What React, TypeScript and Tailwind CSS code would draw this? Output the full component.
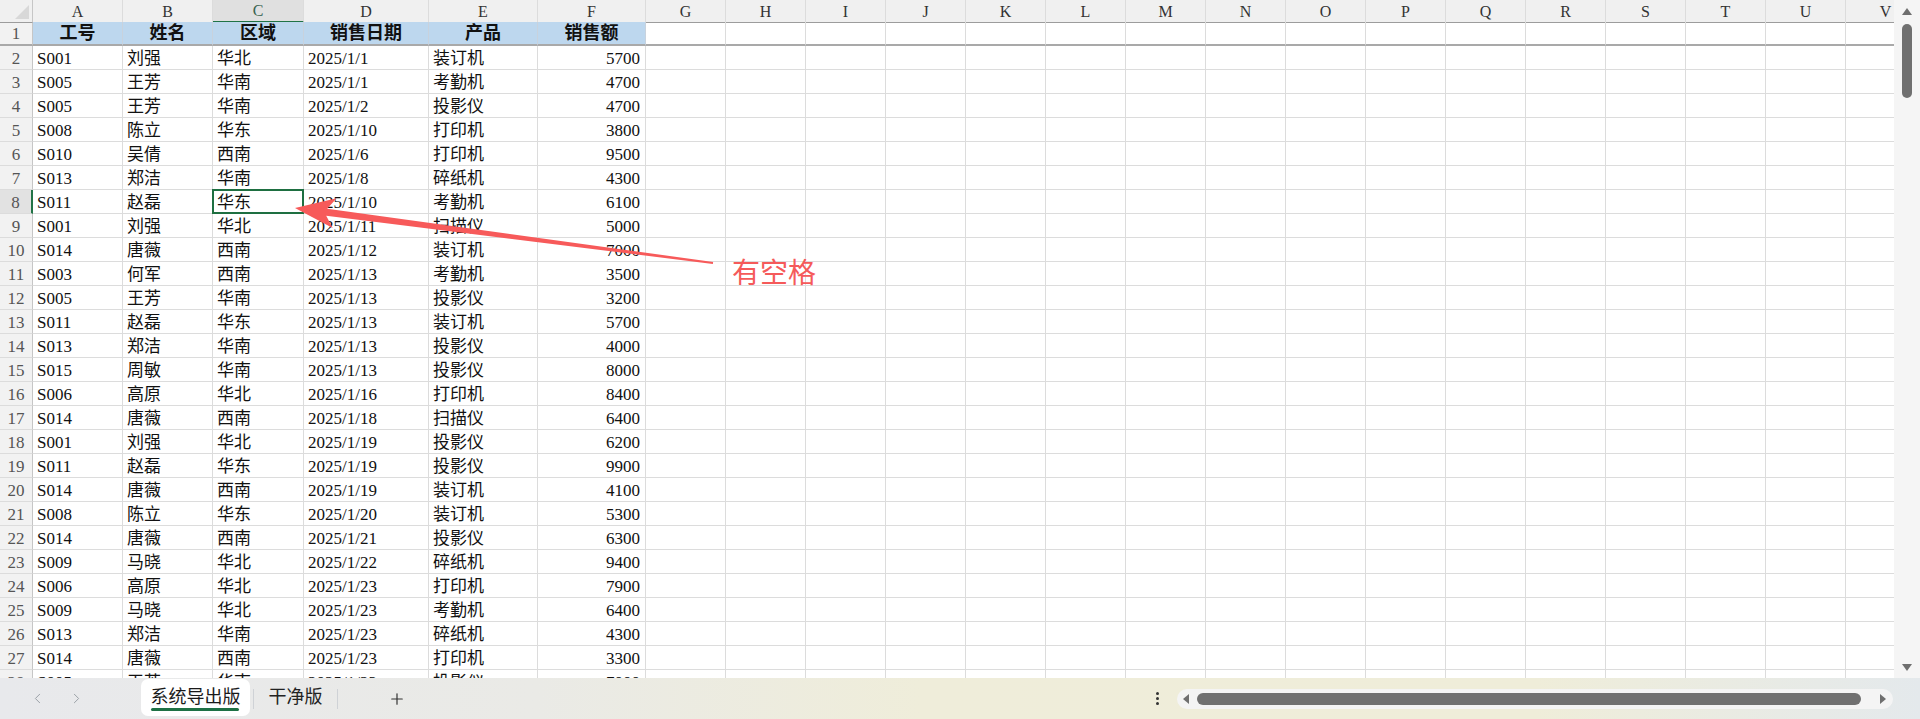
import { ChevronLeft, ChevronRight, Plus } from "lucide-react";

type Row = [string, string, string, string, string, number];

// 系统导出版 sheet data
const ROWS: Row[] = [
  ["S001", "刘强", "华北", "2025/1/1", "装订机", 5700],
  ["S005", "王芳", "华南", "2025/1/1", "考勤机", 4700],
  ["S005", "王芳", "华南", "2025/1/2", "投影仪", 4700],
  ["S008", "陈立", "华东", "2025/1/10", "打印机", 3800],
  ["S010", "吴倩", "西南", "2025/1/6", "打印机", 9500],
  ["S013", "郑洁", "华南", "2025/1/8", "碎纸机", 4300],
  ["S011", "赵磊", "华东 ", "2025/1/10", "考勤机", 6100],
  ["S001", "刘强", "华北", "2025/1/11", "扫描仪", 5000],
  ["S014", "唐薇", "西南", "2025/1/12", "装订机", 7000],
  ["S003", "何军", "西南", "2025/1/13", "考勤机", 3500],
  ["S005", "王芳", "华南", "2025/1/13", "投影仪", 3200],
  ["S011", "赵磊", "华东", "2025/1/13", "装订机", 5700],
  ["S013", "郑洁", "华南", "2025/1/13", "投影仪", 4000],
  ["S015", "周敏", "华南", "2025/1/13", "投影仪", 8000],
  ["S006", "高原", "华北", "2025/1/16", "打印机", 8400],
  ["S014", "唐薇", "西南", "2025/1/18", "扫描仪", 6400],
  ["S001", "刘强", "华北", "2025/1/19", "投影仪", 6200],
  ["S011", "赵磊", "华东", "2025/1/19", "投影仪", 9900],
  ["S014", "唐薇", "西南", "2025/1/19", "装订机", 4100],
  ["S008", "陈立", "华东", "2025/1/20", "装订机", 5300],
  ["S014", "唐薇", "西南", "2025/1/21", "投影仪", 6300],
  ["S009", "马晓", "华北", "2025/1/22", "碎纸机", 9400],
  ["S006", "高原", "华北", "2025/1/23", "打印机", 7900],
  ["S009", "马晓", "华北", "2025/1/23", "考勤机", 6400],
  ["S013", "郑洁", "华南", "2025/1/23", "碎纸机", 4300],
  ["S014", "唐薇", "西南", "2025/1/23", "打印机", 3300],
  ["S005", "王芳", "华南", "2025/1/23", "投影仪", 7000],
];

const HEADERS = ["工号", "姓名", "区域", "销售日期", "产品", "销售额"];
const LETTERS = "ABCDEFGHIJKLMNOPQRSTUV".split("");
const EMPTY = LETTERS.slice(6);

const GRID =
  "grid grid-cols-[33px_90px_90px_91px_125px_109px_108px_repeat(16,80px)]";

function ColumnHeader() {
  return (
    <div className={`${GRID} h-[22px]`}>
      <div className="relative bg-[#f0f0f0] border-r border-r-[#c6c6c6] border-b border-b-[#9c9c9c]">
        <svg className="absolute right-[3px] bottom-[3px]" width="14" height="14" viewBox="0 0 14 14">
          <polygon points="14,0 14,14 0,14" fill="#d8d8d8" />
        </svg>
      </div>
      {LETTERS.map((l) => (
        <div
          key={l}
          className={`flex items-center justify-center text-[16px] border-r border-r-[#dcdcdc] ${
            l === "C"
              ? "bg-[#e0e0e0] border-b-2 border-b-[#217346] text-[#3a6450]"
              : "bg-[#f0f0f0] border-b border-b-[#9c9c9c] text-[#333]"
          }`}
        >
          {l}
        </div>
      ))}
    </div>
  );
}

function HeaderRow() {
  return (
    <div className={`${GRID} h-[24px]`}>
      <div className="flex items-center justify-center bg-[#f2f2f2] text-[#555] border-r border-r-[#c6c6c6] border-b-2 border-b-[#a9a9a9]">
        1
      </div>
      {HEADERS.map((h) => (
        <div
          key={h}
          className="flex items-center justify-center bg-[#bdd7ee] font-bold text-[18px] text-[#111] border-r border-r-[#c8d2dd] border-b-2 border-b-[#a9a9a9] pt-[1px]"
        >
          {h}
        </div>
      ))}
      {EMPTY.map((l) => (
        <div key={l} className="border-r border-r-[#dcdcdc] border-b-2 border-b-[#a9a9a9]" />
      ))}
    </div>
  );
}

function DataRow({ n, row }: { n: number; row: Row }) {
  const sel = n === 8;
  const cell =
    "flex items-center px-[4px] pt-[2px] whitespace-nowrap overflow-hidden border-r border-b border-[#dcdcdc]";
  return (
    <div className={`${GRID} h-[24px]`}>
      <div
        className={`flex items-center justify-center pt-[1px] border-b border-b-[#dcdcdc] text-[#555] ${
          sel ? "bg-[#e2e2e2] border-r-2 border-r-[#217346]" : "bg-[#f2f2f2] border-r border-r-[#c6c6c6]"
        }`}
      >
        {n}
      </div>
      <div className={cell}>{row[0]}</div>
      <div className={cell}>{row[1]}</div>
      <div className={`${cell} relative overflow-visible`}>
        {row[2]}
        {sel && (
          <div className="absolute -left-[1px] -top-[1px] -right-[1px] -bottom-[1px] border-2 border-[#1e6f41]" />
        )}
      </div>
      <div className={cell}>{row[3]}</div>
      <div className={cell}>{row[4]}</div>
      <div className={`${cell} justify-end pr-[5px]`}>{row[5]}</div>
      {EMPTY.map((l) => (
        <div key={l} className="border-r border-b border-[#dcdcdc]" />
      ))}
    </div>
  );
}

function VScrollbar() {
  return (
    <div className="w-[26px] h-full bg-[#f5f5f5] flex flex-col items-center">
      <div className="mt-[8px] w-0 h-0 border-x-[5px] border-x-transparent border-b-[7px] border-b-[#6f6f6f]" />
      <div className="mt-[9px] w-[10px] h-[74px] rounded-full bg-[#707070]" />
      <div className="mt-auto mb-[7px] w-0 h-0 border-x-[5px] border-x-transparent border-t-[7px] border-t-[#6f6f6f]" />
    </div>
  );
}

function TabBar() {
  return (
    <div className="h-[41px] flex items-stretch bg-[linear-gradient(to_right,#e8e9ec_0%,#eaeae6_28%,#efedda_48%,#efedd9_80%,#e4e9ec_100%)] font-['Noto_Sans_CJK_SC',sans-serif]">
      <div className="w-[141px] flex items-center">
        <ChevronLeft className="ml-[29px] text-[#9aa0a6]" size={17} strokeWidth={1.4} />
        <ChevronRight className="ml-[22px] text-[#9aa0a6]" size={17} strokeWidth={1.4} />
      </div>
      <div className="relative w-[109px] h-[37px] mt-[1px] rounded-[7px] bg-white flex justify-center pt-[4px] text-[18px] leading-[24px] text-[#1a1a1a]">
        系统导出版
        <div className="absolute left-[10px] right-[11px] top-[29px] h-[3px] rounded-full bg-[#1e7145]" />
      </div>
      <div className="ml-[3px] self-center w-px h-[20px] bg-[#cfd2d6]" />
      <div className="w-[83px] flex justify-center pt-[5px] text-[18px] leading-[24px] text-[#222]">
        干净版
      </div>
      <div className="self-center w-px h-[20px] bg-[#cfd2d6]" />
      <div className="flex items-center">
        <Plus className="ml-[50px] text-[#333]" size={18} strokeWidth={1.6} />
      </div>
      <div className="ml-auto flex items-center mr-[27px]">
        <div className="flex flex-col gap-[2px] mr-[18px]">
          <div className="w-[3px] h-[3px] rounded-full bg-[#333]" />
          <div className="w-[3px] h-[3px] rounded-full bg-[#333]" />
          <div className="w-[3px] h-[3px] rounded-full bg-[#333]" />
        </div>
        <div className="w-[716px] h-[20px] rounded-full bg-[#f4f4f4] flex items-center pl-[6px]">
          <div className="w-0 h-0 border-y-[5px] border-y-transparent border-r-[6px] border-r-[#6f6f6f]" />
          <div className="ml-[8px] w-[664px] h-[12px] rounded-full bg-[#707070]" />
          <div className="ml-[19px] w-0 h-0 border-y-[5px] border-y-transparent border-l-[6px] border-l-[#6f6f6f]" />
        </div>
      </div>
    </div>
  );
}

export default function App() {
  return (
    <div className="relative w-[1920px] h-[719px] overflow-hidden bg-white flex flex-col">
      <div className="flex h-[678px]">
        <div className="w-[1894px] h-full overflow-hidden font-['Liberation_Serif','Noto_Sans_CJK_SC',serif] text-[17px] leading-[21px] text-[#111]">
          <ColumnHeader />
          <HeaderRow />
          {ROWS.map((r, i) => (
            <DataRow key={i} n={i + 2} row={r} />
          ))}
        </div>
        <VScrollbar />
      </div>
      <TabBar />

      {/* annotation arrow */}
      <svg className="absolute left-0 top-0 pointer-events-none" width="1920" height="719" viewBox="0 0 1920 719">
        <polygon
          points="295,208 336.6,198.3 327.2,208.7 713.1,262 712.9,264 326.2,215.7 332.7,228.1"
          fill="#f75a5a"
        />
      </svg>
      <div className="absolute left-[732px] top-[255px] text-[28px] leading-[32px] text-[#f55a5a] font-['Noto_Sans_CJK_SC',sans-serif]">
        有空格
      </div>
    </div>
  );
}
